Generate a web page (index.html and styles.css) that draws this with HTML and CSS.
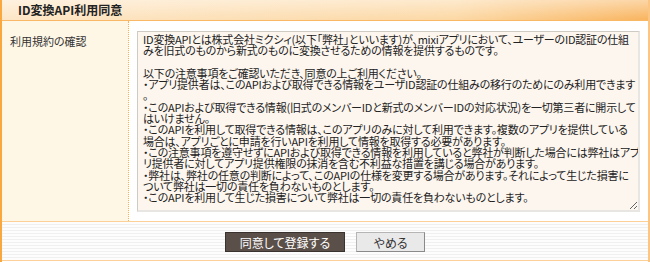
FILE: index.html
```html
<!DOCTYPE html>
<html lang="ja">
<head>
    <meta charset="UTF-8">
    <title>ID変換API利用同意</title>
    <link rel="stylesheet" href="styles.css">
</head>
<body>
<div class="panel">
    <h1 class="panel-title">ID変換API利用同意</h1>

    <div class="form-row">
        <div class="label-cell">利用規約の確認</div>
        <div class="field-cell">
            <textarea class="terms" wrap="off" readonly>ID変換APIとは株式会社ミクシィ(以下「弊社」といいます)が、mixiアプリにおいて、ユーザーのID認証の仕組
みを旧式のものから新式のものに変換させるための情報を提供するものです。

以下の注意事項をご確認いただき、同意の上ご利用ください。
・アプリ提供者は、このAPIおよび取得できる情報をユーザID認証の仕組みの移行のためにのみ利用できます
。
・このAPIおよび取得できる情報(旧式のメンバーIDと新式のメンバーIDの対応状況)を一切第三者に開示して
はいけません。
・このAPIを利用して取得できる情報は、このアプリのみに対して利用できます。複数のアプリを提供している
場合は、アプリごとに申請を行いAPIを利用して情報を取得する必要があります。
・この注意事項を遵守せずにAPIおよび取得できる情報を利用していると弊社が判断した場合には弊社はアプ
リ提供者に対してアプリ提供権限の抹消を含む不利益な措置を講じる場合があります。
・弊社は、弊社の任意の判断によって、このAPIの仕様を変更する場合があります。それによって生じた損害に
ついて弊社は一切の責任を負わないものとします。
・このAPIを利用して生じた損害について弊社は一切の責任を負わないものとします。</textarea>
        </div>
    </div>

    <div class="actions">
        <button type="submit" class="btn btn-primary">同意して登録する</button>
        <button type="button" class="btn btn-cancel">やめる</button>
    </div>
</div>
</body>
</html>
```

FILE: styles.css
```css
/* page */
body {
    margin: 0;
    font-family: "MS PGothic", "Noto Sans CJK JP", sans-serif;
    font-size: 12px;
    color: #333;
    background: #fff;
}

.panel {
    width: 650px;
    height: 262px;
    box-sizing: border-box;
    border-left: 2px solid #f8a83e;
    border-right: 2px solid #fbc684;
}

/* title bar */
.panel-title {
    margin: 0;
    height: 20px;
    line-height: 20px;
    padding-left: 16px;
    font-size: 12px;
    font-weight: bold;
    color: #222;
    border-bottom: 1px solid #f8b865;
    background: linear-gradient(to bottom, rgba(255, 255, 255, 0.45), rgba(255, 255, 255, 0)),
                linear-gradient(to right, #fde6c6, #fcd8a4 70%, #f9b45e);
}

/* form row */
.form-row {
    display: flex;
    height: 200px;
}

.label-cell {
    width: 118px;
    padding: 12px 0 0 8px;
    background: #fff7e6;
    border-right: 1px dotted #f9b45a;
    font-size: 11px;
    font-feature-settings: "palt";
}

.field-cell {
    flex: 1;
    padding: 10px 7px 0 8px;
}

.terms {
    display: block;
    width: 503px;
    height: 181px;
    box-sizing: border-box;
    margin: 0;
    padding: 2px 5px;
    border: 1px solid #cfcac4;
    border-right: 2px solid #e8e6e3;
    border-bottom: 2px solid #e8e6e3;
    background: #fdf6ee;
    color: #222;
    font-family: "MS PGothic", "Noto Sans CJK JP", sans-serif;
    font-size: 11px;
    line-height: 11.3px;
    font-feature-settings: "palt";
    letter-spacing: -0.2px;
    overflow: hidden;
    resize: both;
}

/* buttons */
.actions {
    height: 40px;
    box-sizing: border-box;
    padding-top: 10px;
    border-top: 1px solid #fcd096;
    border-bottom: 1px solid #fcd096;
    display: flex;
    justify-content: center;
    align-items: flex-start;
    gap: 11px;
    background: repeating-linear-gradient(to bottom, #fdfdfd 0, #fdfdfd 2px, #f0f0f0 2px, #f0f0f0 3px);
}

.btn {
    height: 20px;
    margin: 0;
    padding: 0;
    font-family: "MS PGothic", "Noto Sans CJK JP", sans-serif;
    font-size: 12px;
    font-feature-settings: "palt";
    cursor: pointer;
}

.btn-primary {
    width: 120px;
    background: #5b4f49;
    color: #fff;
    border: 1px solid #3a322e;
}

.btn-cancel {
    width: 69px;
    background: #e9e9e9;
    color: #333;
    border: 1px solid #8a8a8a;
    border-top-color: #b5b5b5;
    border-left-color: #b5b5b5;
}
```
